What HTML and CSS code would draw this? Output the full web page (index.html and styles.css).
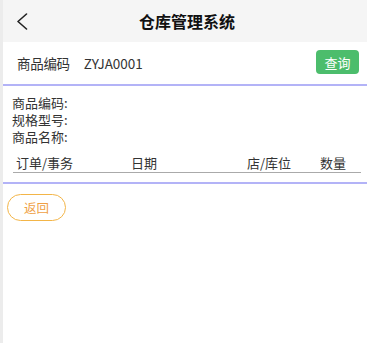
FILE: index.html
```html
<!DOCTYPE html>
<html lang="zh">
<head>
<meta charset="utf-8">
<link rel="stylesheet" href="styles.css">
</head>
<body>
<div class="page">
  <header class="header">
    <span class="back">
      <svg width="12" height="17" viewBox="0 0 12 17"><path d="M10.5 1 L2 8.5 L10.5 16" fill="none" stroke="#222" stroke-width="1.6" stroke-linecap="round" stroke-linejoin="round"/></svg>
    </span>
    <h1 class="title">仓库管理系统</h1>
    <span></span>
  </header>
  <section class="search">
    <span class="search-label">商品编码</span>
    <span class="search-value">ZYJA0001</span>
    <button class="btn-query">查询</button>
  </section>
  <section class="info">
    <div class="info-line">商品编码:</div>
    <div class="info-line">规格型号:</div>
    <div class="info-line">商品名称:</div>
    <div class="table-head">
      <span>订单/事务</span>
      <span>日期</span>
      <span>店/库位</span>
      <span>数量</span>
    </div>
  </section>
  <div class="actions">
    <button class="btn-back">返回</button>
  </div>
</div>
</body>
</html>
```
FILE: styles.css
```css
html, body {
  margin: 0;
  padding: 0;
  background: #fff;
}
body {
  font-family: "Noto Sans CJK SC", "Noto Sans", sans-serif;
  color: #333;
}
.page {
  min-height: 343px;
  border-left: 3px solid #ececec;
  box-sizing: border-box;
  display: flex;
  flex-direction: column;
}
.header {
  height: 42px;
  background: #f5f5f5;
  display: grid;
  grid-template-columns: 40px 1fr 40px;
  align-items: center;
  padding-left: 4px;
}
.back {
  display: flex;
  padding-left: 9px;
  padding-top: 1px;
}
.title {
  margin: 0;
  text-align: center;
  font-size: 16px;
  font-weight: bold;
  color: #111;
  line-height: 20px;
}
.search {
  height: 42px;
  display: flex;
  align-items: center;
  padding: 0 8px 0 14px;
  border-bottom: 2px solid #b3b3f7;
  font-size: 13.5px;
}
.search-label {
  color: #333;
  margin-right: 14px;
  letter-spacing: -0.3px;
}
.search-value {
  color: #333;
  flex: 1;
}
.btn-query {
  width: 43px;
  height: 24px;
  border: none;
  border-radius: 4px;
  background: #4cbd6c;
  color: #fff;
  font-family: inherit;
  font-size: 13px;
  padding: 0;
  margin-top: -2px;
}
.info {
  padding: 8px 6px 9px 9px;
  border-bottom: 2px solid #b3b3f7;
  font-size: 13px;
}
.info-line {
  line-height: 17px;
}
.table-head {
  margin: 9px 0 0 1px;
  display: grid;
  grid-template-columns: 115px 116px 73px auto;
  padding-left: 3px;
  line-height: 17px;
  border-bottom: 1px solid #aaa;
  padding-bottom: 1px;
}
.actions {
  padding: 10px 0 0 4px;
}
.btn-back {
  width: 59px;
  height: 27px;
  border: 1px solid #f3b548;
  border-radius: 14px;
  background: #fff;
  color: #ef9f45;
  font-family: inherit;
  font-size: 12.5px;
  padding: 0;
}
```
